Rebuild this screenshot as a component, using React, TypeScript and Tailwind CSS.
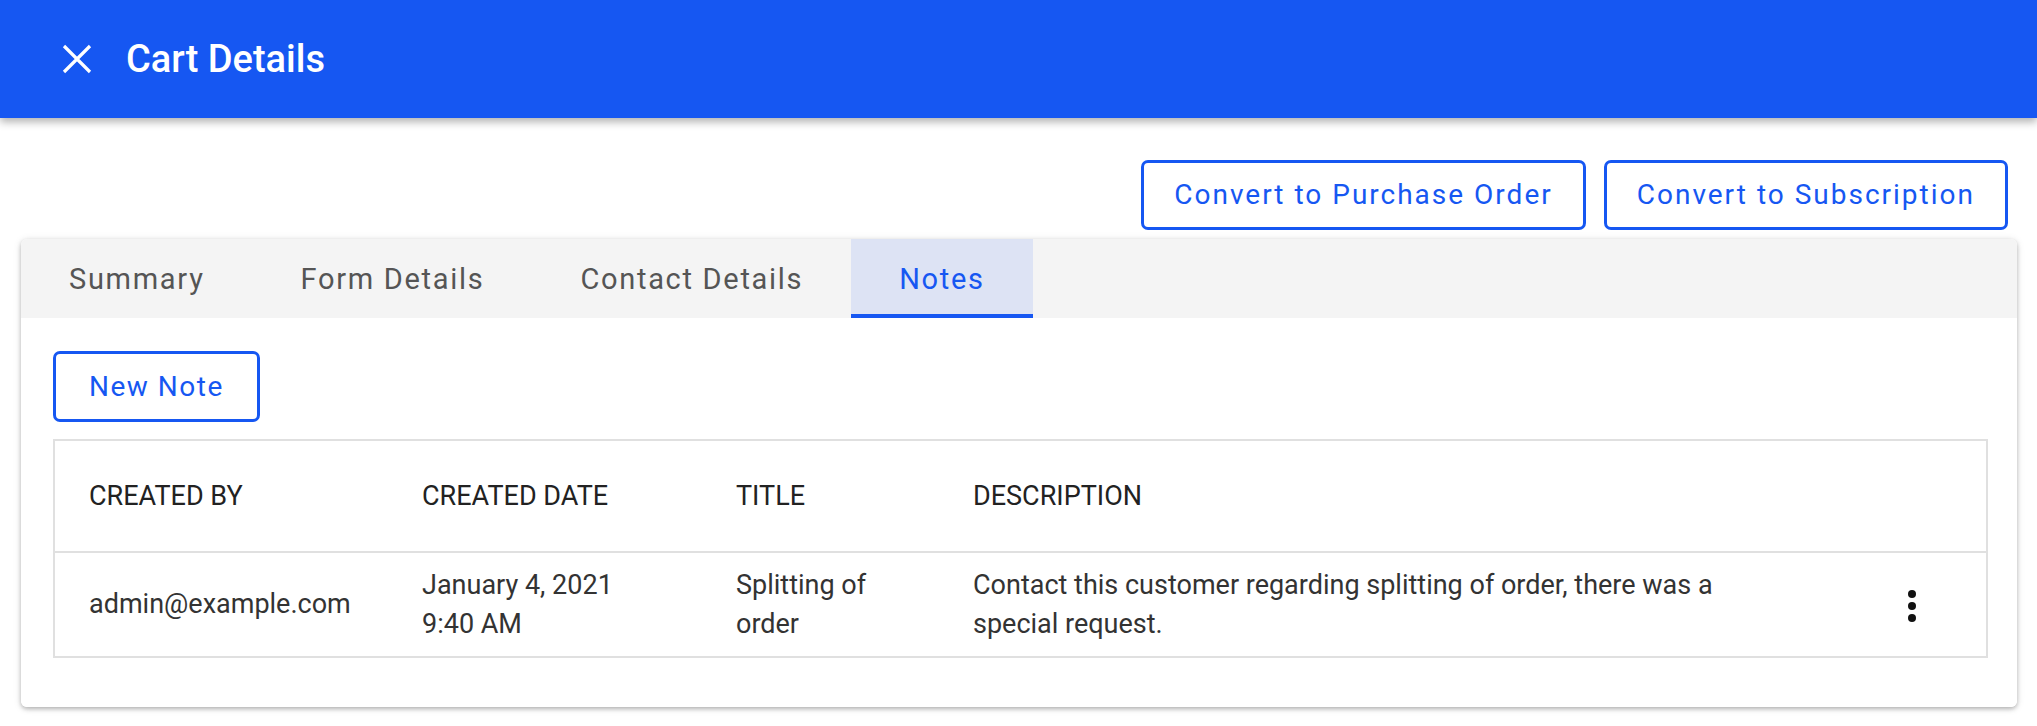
import React from 'react';

const tabs = ['Summary', 'Form Details', 'Contact Details', 'Notes'];

export default function App() {
  const active = 'Notes';

  return (
    <div className="min-h-screen bg-white font-['Roboto',sans-serif] text-[#222]">
      <header className="h-[118px] bg-[#1657f2] flex items-center pl-[62px] shadow-[0_4px_8px_rgba(0,0,0,0.3)] relative z-10">
        <button className="w-[30px] h-[30px] flex items-center justify-center text-white">
          <svg width="30" height="30" viewBox="0 0 30 30" fill="none" stroke="currentColor" strokeWidth="3.2">
            <path d="M2 2 L28 28 M28 2 L2 28" />
          </svg>
        </button>
        <h1 className="ml-[34px] text-white text-[38px] font-medium leading-none">Cart Details</h1>
      </header>

      <div className="flex justify-end gap-[18px] pr-[29px] pt-[42px]">
        <button className="h-[70px] px-[30px] border-[3px] border-[#1657f2] rounded-[7px] text-[#1657f2] text-[28px] tracking-[2px]">
          Convert to Purchase Order
        </button>
        <button className="h-[70px] px-[30px] border-[3px] border-[#1657f2] rounded-[7px] text-[#1657f2] text-[28px] tracking-[2px]">
          Convert to Subscription
        </button>
      </div>

      <div className="mx-[21px] mr-[20px] mt-[9px] rounded-[6px] shadow-[0_2px_4px_rgba(0,0,0,0.25),0_1px_8px_rgba(0,0,0,0.1)] overflow-hidden">
        <div className="flex bg-[#f4f4f4] h-[79px]">
          {tabs.map((t) => (
            <div
              key={t}
              className={
                t === active
                  ? 'px-[48px] pt-[6px] flex items-center text-[29px] tracking-[1.7px] bg-[#dde3f4] text-[#1657f2] border-b-[4px] border-[#1657f2]'
                  : 'px-[48px] pt-[6px] flex items-center text-[29px] tracking-[1.7px] text-[#555] border-b-[4px] border-transparent'
              }
            >
              {t}
            </div>
          ))}
        </div>

        <div className="bg-white pt-[33px] pl-[32px] pr-[29px] pb-[49px]">
          <button className="h-[71px] px-[33px] border-[3px] border-[#1657f2] rounded-[7px] text-[#1657f2] text-[28px] tracking-[1.5px]">
            New Note
          </button>

          <table className="mt-[17px] w-full border-2 border-[#e0e0e0] border-collapse text-[27px]">
            <thead>
              <tr className="h-[112px] border-b-2 border-[#e0e0e0] text-left">
                <th className="w-[334px] px-[34px] font-normal">CREATED BY</th>
                <th className="w-[314px] px-[34px] font-normal">CREATED DATE</th>
                <th className="w-[237px] px-[34px] font-normal">TITLE</th>
                <th className="w-[892px] px-[34px] font-normal">DESCRIPTION</th>
                <th className="px-[34px]"></th>
              </tr>
            </thead>
            <tbody>
              <tr className="h-[105px] border-b-2 border-[#e0e0e0] leading-[39px] text-[#333]">
                <td className="px-[34px]">admin@example.com</td>
                <td className="px-[34px]">
                  <div>January 4, 2021</div>
                  <div>9:40 AM</div>
                </td>
                <td className="px-[34px]">Splitting of order</td>
                <td className="px-[34px]">
                  Contact this customer regarding splitting of order, there was a special request.
                </td>
                <td className="pl-[34px] pr-[68px] text-right">
                  <svg className="inline-block" width="12" height="34" viewBox="0 0 12 34" fill="#111">
                    <circle cx="6" cy="5" r="4" />
                    <circle cx="6" cy="17" r="4" />
                    <circle cx="6" cy="29" r="4" />
                  </svg>
                </td>
              </tr>
            </tbody>
          </table>
        </div>
      </div>
    </div>
  );
}
